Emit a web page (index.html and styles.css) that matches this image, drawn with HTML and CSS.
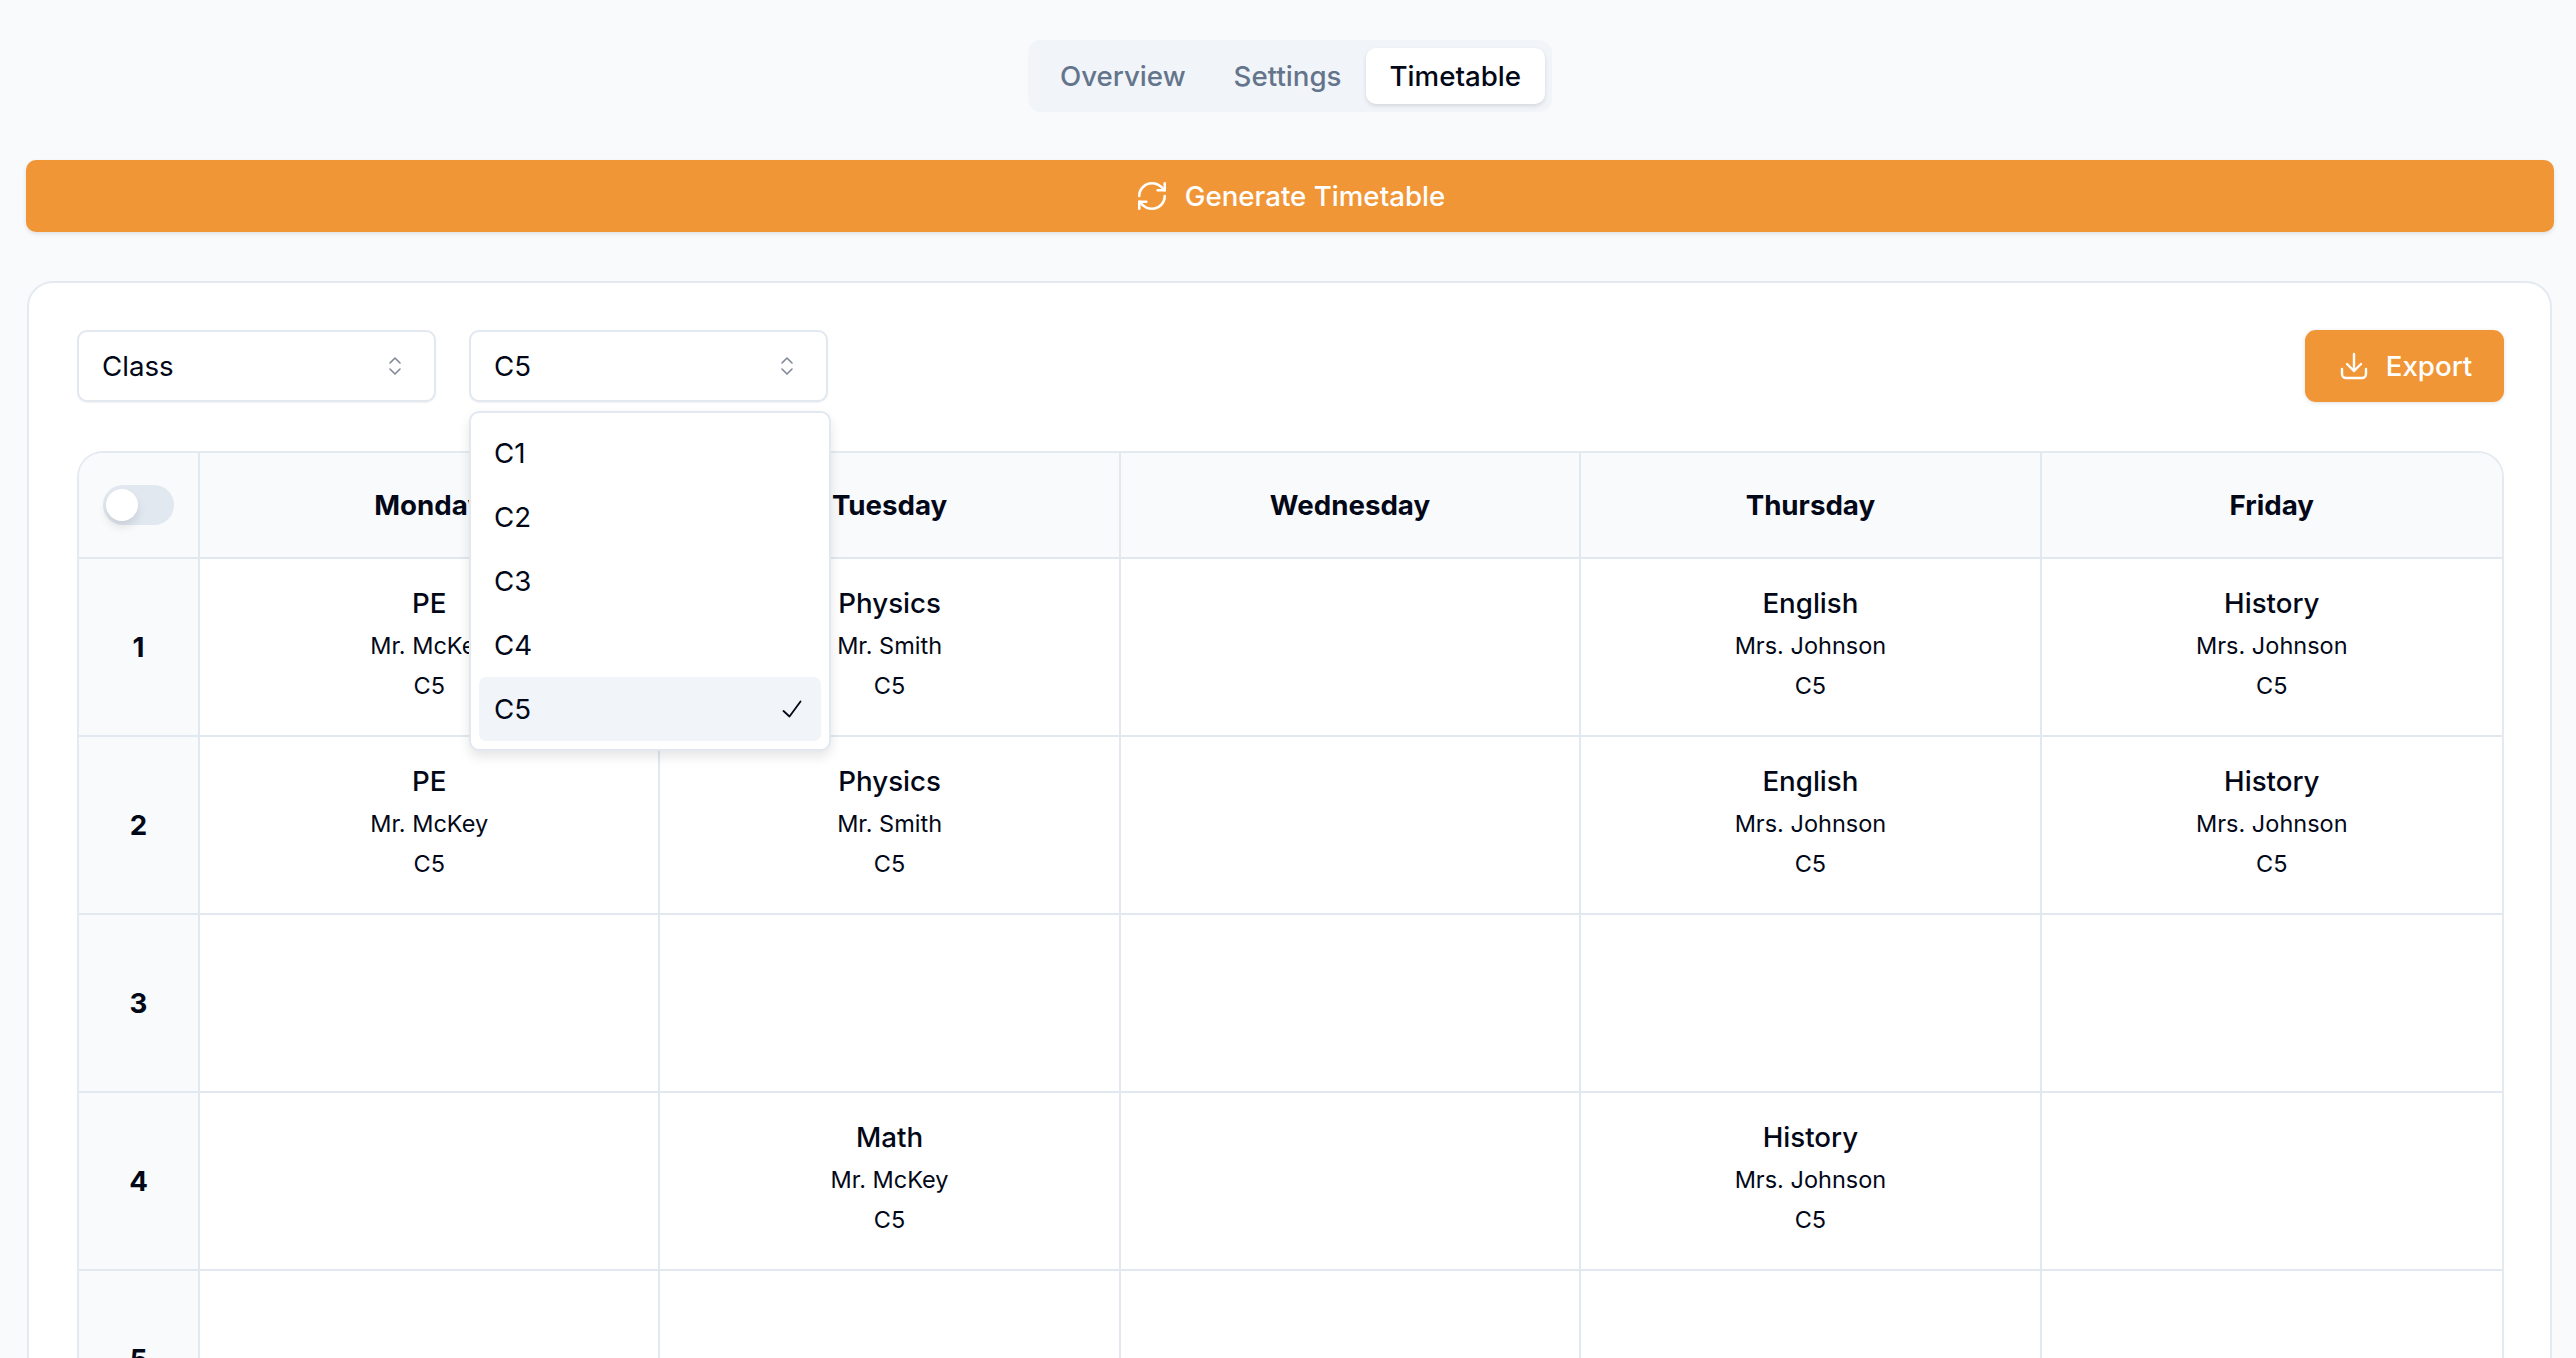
FILE: index.html
```html
<!DOCTYPE html>
<html lang="en">
<head>
    <meta charset="UTF-8">
    <title>Timetable</title>
    <link rel="stylesheet" href="styles.css">
</head>
<body>
    <div class="page">
        <!-- Tabs -->
        <nav class="tabs">
            <a href="#" class="tab">Overview</a>
            <a href="#" class="tab">Settings</a>
            <a href="#" class="tab active">Timetable</a>
        </nav>

        <button class="generate" type="button">
            <svg class="icon-refresh" viewBox="0 0 24 24" fill="none" stroke="currentColor" stroke-width="1.8" stroke-linecap="round" stroke-linejoin="round">
                <path d="M3 12a9 9 0 0 1 9-9 9.75 9.75 0 0 1 6.74 2.74L21 8"/>
                <path d="M21 3v5h-5"/>
                <path d="M21 12a9 9 0 0 1-9 9 9.75 9.75 0 0 1-6.74-2.74L3 16"/>
                <path d="M8 16H3v5"/>
            </svg>
            Generate Timetable
        </button>

        <section class="card">
            <div class="toolbar">
                <div class="select">
                    <span>Class</span>
                    <svg class="chevrons" viewBox="0 0 14 20" fill="none" stroke="currentColor" stroke-width="1.6" stroke-linecap="round" stroke-linejoin="round">
                        <path d="M2 7l5-5 5 5"/>
                        <path d="M2 13l5 5 5-5"/>
                    </svg>
                </div>
                <div class="select">
                    <span>C5</span>
                    <svg class="chevrons" viewBox="0 0 14 20" fill="none" stroke="currentColor" stroke-width="1.6" stroke-linecap="round" stroke-linejoin="round">
                        <path d="M2 7l5-5 5 5"/>
                        <path d="M2 13l5 5 5-5"/>
                    </svg>

                    <!-- Open dropdown -->
                    <ul class="menu">
                        <li>C1</li>
                        <li>C2</li>
                        <li>C3</li>
                        <li>C4</li>
                        <li class="selected">
                            C5
                            <svg class="check" viewBox="0 0 20 18" fill="none" stroke="currentColor" stroke-width="1.8" stroke-linecap="round" stroke-linejoin="round">
                                <path d="M1.5 11l6 5.5L18.5 1.5"/>
                            </svg>
                        </li>
                    </ul>
                </div>
                <button class="export" type="button">
                    <svg class="icon-export" viewBox="0 0 28 28" fill="none" stroke="currentColor" stroke-width="2.4" stroke-linecap="round" stroke-linejoin="round">
                        <path d="M2 17v5a4 4 0 0 0 4 4h16a4 4 0 0 0 4-4v-5"/>
                        <path d="M14 2v17"/>
                        <path d="M7 12l7 7 7-7"/>
                    </svg>
                    Export
                </button>
            </div>

            <div class="timetable">
                <div class="head corner"><span class="switch"><span class="thumb"></span></span></div>
                <div class="head">Monday</div>
                <div class="head">Tuesday</div>
                <div class="head">Wednesday</div>
                <div class="head">Thursday</div>
                <div class="head">Friday</div>

                <div class="period">1</div>
                <div class="slot"><b>PE</b><span>Mr. McKey</span><span>C5</span></div>
                <div class="slot"><b>Physics</b><span>Mr. Smith</span><span>C5</span></div>
                <div class="slot"></div>
                <div class="slot"><b>English</b><span>Mrs. Johnson</span><span>C5</span></div>
                <div class="slot"><b>History</b><span>Mrs. Johnson</span><span>C5</span></div>

                <div class="period">2</div>
                <div class="slot"><b>PE</b><span>Mr. McKey</span><span>C5</span></div>
                <div class="slot"><b>Physics</b><span>Mr. Smith</span><span>C5</span></div>
                <div class="slot"></div>
                <div class="slot"><b>English</b><span>Mrs. Johnson</span><span>C5</span></div>
                <div class="slot"><b>History</b><span>Mrs. Johnson</span><span>C5</span></div>

                <div class="period">3</div>
                <div class="slot"></div>
                <div class="slot"></div>
                <div class="slot"></div>
                <div class="slot"></div>
                <div class="slot"></div>

                <div class="period">4</div>
                <div class="slot"></div>
                <div class="slot"><b>Math</b><span>Mr. McKey</span><span>C5</span></div>
                <div class="slot"></div>
                <div class="slot"><b>History</b><span>Mrs. Johnson</span><span>C5</span></div>
                <div class="slot"></div>

                <div class="period">5</div>
                <div class="slot"></div>
                <div class="slot"></div>
                <div class="slot"></div>
                <div class="slot"></div>
                <div class="slot"></div>
            </div>
        </section>
    </div>
</body>
</html>
```

FILE: styles.css
```css
* {
    box-sizing: border-box;
}

html, body {
    margin: 0;
    height: 100%;
    overflow: hidden;
}

body {
    font-family: Inter, "Liberation Sans", sans-serif;
    background-color: #f8fafc;
    color: #020817;
}

.page {
    height: 100vh;
    overflow: hidden;
    padding: 40px 22px 0 26px;
}

/* Tabs */
.tabs {
    display: flex;
    width: fit-content;
    height: 72px;
    margin: 0 auto 48px auto;
    padding: 8px 7px 8px 8px;
    background-color: #f1f5f9;
    border-radius: 13px;
}

.tab {
    display: flex;
    align-items: center;
    justify-content: center;
    padding: 0 24px;
    font-size: 27.7px;
    font-weight: 500;
    color: #64748b;
    text-decoration: none;
    border-radius: 10px;
}

.tab.active {
    background-color: #fff;
    color: #020817;
    box-shadow: 0 2px 4px rgba(0, 0, 0, 0.12);
}

/* Buttons */
.generate {
    display: flex;
    align-items: center;
    justify-content: center;
    gap: 16px;
    width: 100%;
    height: 72px;
    margin-bottom: 49px;
    font-family: inherit;
    font-size: 27.7px;
    font-weight: 500;
    color: #fff;
    background-color: #f19637;
    border: none;
    border-radius: 10px;
    box-shadow: 0 2px 4px rgba(0, 0, 0, 0.1);
}

.icon-refresh {
    width: 34px;
    height: 34px;
}

.export {
    display: flex;
    align-items: center;
    justify-content: center;
    gap: 18px;
    width: 199px;
    height: 72px;
    margin-left: auto;
    padding-left: 9px;
    font-family: inherit;
    font-size: 27.7px;
    font-weight: 500;
    color: #fff;
    background-color: #f19637;
    border: none;
    border-radius: 11px;
    box-shadow: 0 1px 4px rgba(0, 0, 0, 0.12);
}

.icon-export {
    width: 28px;
    height: 28px;
}

/* Card */
.card {
    padding: 47px 46px 47px 48px;
    margin: 0 2px 0 1px;
    height: 1400px;
    background-color: #fff;
    border: 2px solid #e5eaf1;
    border-radius: 26px;
}

.toolbar {
    display: flex;
    gap: 33px;
    margin-bottom: 49px;
}

/* Select boxes */
.select {
    position: relative;
    display: flex;
    align-items: center;
    justify-content: space-between;
    width: 359px;
    height: 72px;
    padding: 0 32px 0 23px;
    font-size: 27.7px;
    background-color: #fff;
    border: 2px solid #e2e8f0;
    border-radius: 10px;
    box-shadow: 0 1px 2px rgba(0, 0, 0, 0.05);
}

.chevrons {
    width: 14px;
    height: 20px;
    color: #808795;
}

.menu {
    position: absolute;
    top: 79px;
    left: -2px;
    z-index: 5;
    width: 362px;
    margin: 0;
    padding: 8px;
    list-style: none;
    background-color: #fff;
    border: 2px solid #e2e8f0;
    border-radius: 10px;
    box-shadow: 0 6px 12px rgba(0, 0, 0, 0.1);
}

.menu li {
    display: flex;
    align-items: center;
    justify-content: space-between;
    height: 64px;
    padding: 0 19px 0 15px;
    border-radius: 7px;
}

.menu li.selected {
    background-color: #f1f5f9;
}

.check {
    width: 20px;
    height: 18px;
}

/* Timetable grid */
.timetable {
    display: grid;
    grid-template-columns: 121px repeat(5, 1fr);
    grid-auto-rows: 178px;
    grid-template-rows: 106px;
    background-color: #fff;
    border: 2px solid #e5eaf1;
    border-bottom: none;
    border-radius: 26px 26px 0 0;
    overflow: hidden;
}

.timetable > div {
    border-right: 2px solid #e2e8f0;
    border-bottom: 2px solid #e2e8f0;
}

.timetable > div:nth-child(6n) {
    border-right: none;
}

.head, .period {
    display: flex;
    align-items: center;
    justify-content: center;
    font-size: 27.7px;
    font-weight: 700;
    background-color: #f8fafc;
}

.slot {
    display: flex;
    flex-direction: column;
    align-items: center;
    justify-content: center;
    padding-bottom: 7px;
    font-size: 23.5px;
    line-height: 40px;
}

.slot b {
    margin-bottom: 1px;
    font-size: 27.7px;
    font-weight: 500;
    line-height: 44px;
}

/* Toggle */
.switch {
    display: flex;
    align-items: center;
    width: 71px;
    height: 40px;
    padding: 0 3px;
    background-color: #e2e8f0;
    border-radius: 20px;
}

.thumb {
    width: 32px;
    height: 32px;
    background-color: #fff;
    border-radius: 50%;
    box-shadow: 0 6px 10px rgba(0, 0, 0, 0.1);
}
```
